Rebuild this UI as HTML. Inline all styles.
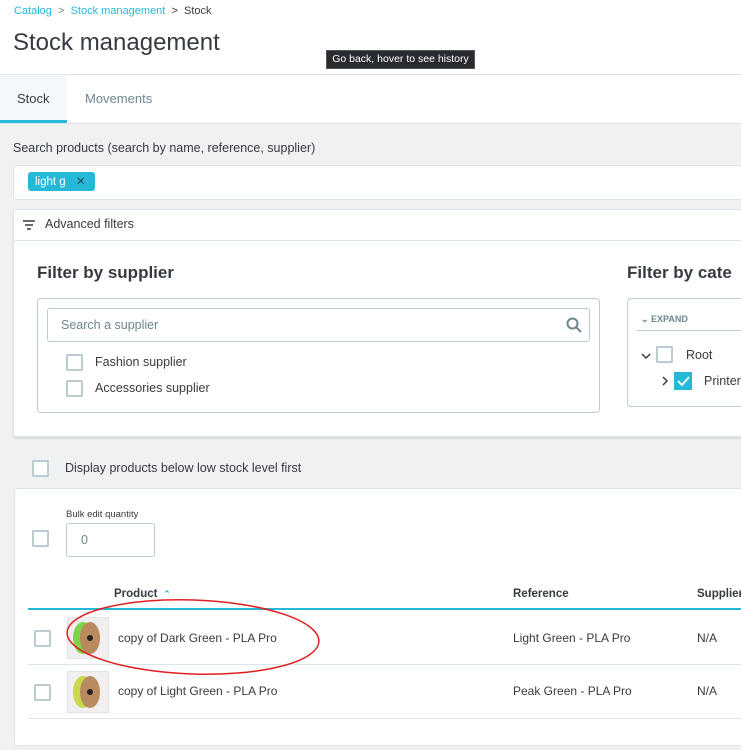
<!DOCTYPE html>
<html><head><style>
*{box-sizing:border-box;margin:0;padding:0}
body{width:741px;height:750px;overflow:hidden;background:#eff1f2;font-family:"Liberation Sans",sans-serif;color:#363a41;position:relative}
.a{position:absolute}
.cb{position:absolute;width:17px;height:17px;border:2px solid #bbcdd2;background:#fff;border-radius:1px}
.t{position:absolute;white-space:nowrap}
</style></head><body>
<div class="a" style="left:0;top:0;width:741px;height:124px;background:#fff"></div>
<div class="t" style="left:14px;top:5px;font-size:11px;color:#25b9d7">Catalog <span style="color:#6c868e">&nbsp;&gt;&nbsp;</span> Stock management <span style="color:#363a41">&nbsp;&gt;&nbsp; Stock</span></div>
<div class="t" style="left:13px;top:29px;font-size:24px;color:#363a41">Stock management</div>
<div class="a" style="left:326px;top:50px;width:149px;height:19px;background:#282b30;border:1px solid #555;color:#fff;font-size:10.5px;line-height:17px;text-align:center">Go back, hover to see history</div>
<div class="a" style="left:0;top:74px;width:741px;height:1px;background:#dfe3e6"></div>
<div class="a" style="left:0;top:75px;width:67px;height:48px;background:#f4f8fb;border-bottom:3px solid #25b9d7"></div>
<div class="t" style="left:17px;top:91px;font-size:13px">Stock</div>
<div class="t" style="left:85px;top:91px;font-size:13px;color:#6c868e">Movements</div>
<div class="a" style="left:0;top:123px;width:741px;height:1px;background:#dfe3e6"></div>
<div class="t" style="left:13px;top:141px;font-size:12.5px">Search products (search by name, reference, supplier)</div>
<div class="a" style="left:13px;top:165px;width:740px;height:35px;background:#fff;border:1px solid #dbe6e9;border-radius:3px"></div>
<div class="a" style="left:28px;top:172px;width:67px;height:19px;background:#25b9d7;border-radius:3px;color:#fff;font-size:11.5px;line-height:20px;padding-left:7px">light g <span style="margin-left:7px;color:#1d4a55">✕</span></div>
<div class="a" style="left:13px;top:209px;width:740px;height:228px;background:#fff;border:1px solid #dbe6e9;border-radius:3px;box-shadow:0 2px 2px rgba(0,0,0,.1)"></div>
<div class="a" style="left:13px;top:240px;width:740px;height:1px;background:#dbe6e9"></div>
<svg class="a" style="left:22px;top:219px" width="14" height="12"><path d="M1 2h12M3 6h8M5 10h4" stroke="#363a41" stroke-width="1.5"/></svg>
<div class="t" style="left:45px;top:217px;font-size:12.5px">Advanced filters</div>
<div class="t" style="left:37px;top:263px;font-size:17px;font-weight:bold">Filter by supplier</div>
<div class="t" style="left:627px;top:263px;font-size:17px;font-weight:bold">Filter by cate</div>
<div class="a" style="left:37px;top:298px;width:563px;height:115px;border:1px solid #bbcdd2;border-radius:4px"></div>
<div class="a" style="left:47px;top:308px;width:543px;height:34px;border:1px solid #bbcdd2;border-radius:3px"></div>
<div class="t" style="left:61px;top:318px;font-size:12.5px;color:#6c868e">Search a supplier</div>
<svg class="a" style="left:566px;top:317px" width="16" height="16"><circle cx="6.5" cy="6.5" r="5" fill="none" stroke="#6c868e" stroke-width="2"/><path d="M10 10l5 5" stroke="#6c868e" stroke-width="2"/></svg>
<div class="cb" style="left:66px;top:354px"></div><div class="t" style="left:95px;top:355px;font-size:12.5px">Fashion supplier</div>
<div class="cb" style="left:66px;top:380px"></div><div class="t" style="left:95px;top:381px;font-size:12.5px">Accessories supplier</div>
<div class="a" style="left:627px;top:298px;width:130px;height:109px;border:1px solid #bbcdd2;border-radius:4px"></div>
<div class="t" style="left:641px;top:314px;font-size:9px;font-weight:bold;color:#6c868e">⌄ EXPAND</div>
<div class="a" style="left:637px;top:330px;width:110px;height:1px;background:#bbcdd2"></div>
<svg class="a" style="left:641px;top:352px" width="10" height="8"><path d="M1 2l4 4 4-4" fill="none" stroke="#363a41" stroke-width="1.5"/></svg>
<div class="cb" style="left:656px;top:346px"></div><div class="t" style="left:686px;top:348px;font-size:12.5px">Root</div>
<svg class="a" style="left:661px;top:376px" width="8" height="10"><path d="M2 1l4 4-4 4" fill="none" stroke="#363a41" stroke-width="1.5"/></svg>
<div class="a" style="left:674px;top:372px;width:18px;height:18px;background:#25b9d7"></div>
<svg class="a" style="left:674px;top:372px" width="18" height="18"><path d="M4 9l4 4 7-8" fill="none" stroke="#fff" stroke-width="1.8"/></svg>
<div class="t" style="left:704px;top:374px;font-size:12.5px">Printer</div>
<div class="cb" style="left:32px;top:460px"></div>
<div class="t" style="left:65px;top:461px;font-size:12.5px">Display products below low stock level first</div>
<div class="a" style="left:14px;top:488px;width:740px;height:258px;background:#fff;border:1px solid #dbe6e9;border-radius:3px"></div>
<div class="t" style="left:66px;top:509px;font-size:9.5px">Bulk edit quantity</div>
<div class="cb" style="left:32px;top:530px"></div>
<div class="a" style="left:66px;top:523px;width:89px;height:34px;border:1px solid #bbcdd2;border-radius:3px"></div>
<div class="t" style="left:81px;top:533px;font-size:12.5px;color:#6c868e">0</div>
<div class="t" style="left:114px;top:588px;font-size:11.5px;font-weight:bold">Product <span style="color:#25b9d7;font-size:9px">&nbsp;⌃</span></div>
<div class="t" style="left:513px;top:588px;font-size:11.5px;font-weight:bold">Reference</div>
<div class="t" style="left:697px;top:588px;font-size:11.5px;font-weight:bold">Supplier</div>
<div class="a" style="left:28px;top:608px;width:713px;height:2px;background:#25b9d7"></div>
<div class="a" style="left:28px;top:664px;width:713px;height:1px;background:#dbe6e9"></div>
<div class="a" style="left:28px;top:718px;width:713px;height:1px;background:#dbe6e9"></div>
<div class="cb" style="left:34px;top:630px"></div>
<div class="cb" style="left:34px;top:684px"></div>
<svg class="a" style="left:67px;top:617px" width="42" height="42"><rect x=".5" y=".5" width="41" height="41" fill="#f1eef0" stroke="#dbe6e9"/><ellipse cx="16" cy="21" rx="10" ry="16" fill="#7fd34a"/><ellipse cx="23" cy="21" rx="10" ry="16" fill="#b98a5e"/><circle cx="23" cy="21" r="3" fill="#222"/></svg>
<svg class="a" style="left:67px;top:671px" width="42" height="42"><rect x=".5" y=".5" width="41" height="41" fill="#f1eef0" stroke="#dbe6e9"/><ellipse cx="16" cy="21" rx="10" ry="16" fill="#c9d84a"/><ellipse cx="23" cy="21" rx="10" ry="16" fill="#b98a5e"/><circle cx="23" cy="21" r="3" fill="#222"/></svg>
<div class="t" style="left:118px;top:631px;font-size:12px">copy of Dark Green - PLA Pro</div>
<div class="t" style="left:118px;top:684px;font-size:12px">copy of Light Green - PLA Pro</div>
<div class="t" style="left:513px;top:631px;font-size:12px">Light Green - PLA Pro</div>
<div class="t" style="left:513px;top:684px;font-size:12px">Peak Green - PLA Pro</div>
<div class="t" style="left:697px;top:631px;font-size:12px">N/A</div>
<div class="t" style="left:697px;top:684px;font-size:12px">N/A</div>
<svg class="a" style="left:0;top:0" width="741" height="750"><ellipse cx="193" cy="637" rx="126" ry="37" transform="rotate(2 193 637)" fill="none" stroke="#e02020" stroke-width="1.5"/></svg>
</body></html>
